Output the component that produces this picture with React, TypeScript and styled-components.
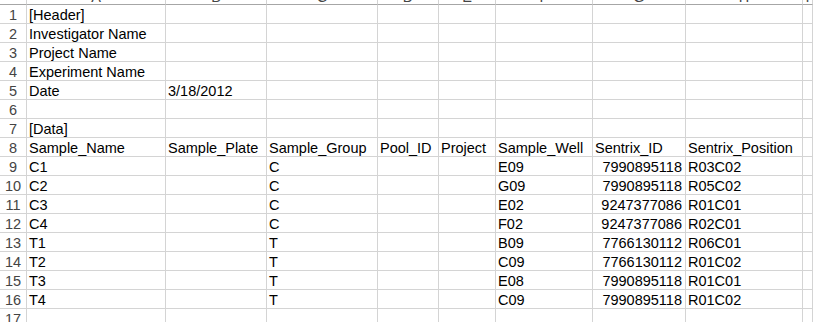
import React from "react";
import styled, { createGlobalStyle } from "styled-components";

const GlobalStyle = createGlobalStyle`
  html, body {
    margin: 0;
    padding: 0;
    background: #fff;
    overflow: hidden;
  }
  body {
    font-family: "Liberation Sans", Arial, sans-serif;
  }
`;

const COLS = ["A", "B", "C", "D", "E", "F", "G", "H", "I"];

// each row: [A, B, C, D, E, F, G, H]; G holds the numeric ids (right aligned)
const ROWS: string[][] = [
  ["[Header]"],
  ["Investigator Name"],
  ["Project Name"],
  ["Experiment Name"],
  ["Date", "3/18/2012"],
  [],
  ["[Data]"],
  ["Sample_Name", "Sample_Plate", "Sample_Group", "Pool_ID", "Project", "Sample_Well", "Sentrix_ID", "Sentrix_Position"],
  ["C1", "", "C", "", "", "E09", "7990895118", "R03C02"],
  ["C2", "", "C", "", "", "G09", "7990895118", "R05C02"],
  ["C3", "", "C", "", "", "E02", "9247377086", "R01C01"],
  ["C4", "", "C", "", "", "F02", "9247377086", "R02C01"],
  ["T1", "", "T", "", "", "B09", "7766130112", "R06C01"],
  ["T2", "", "T", "", "", "C09", "7766130112", "R01C02"],
  ["T3", "", "T", "", "", "E08", "7990895118", "R01C01"],
  ["T4", "", "T", "", "", "C09", "7990895118", "R01C02"],
  [],
];

const isNumber = (v: string) => /^\d+$/.test(v);

export default function App() {
  return (
    <>
      <GlobalStyle />
      <Sheet>
        <Corner />
        {COLS.map((c) => (
          <ColHead key={c}>
            <ColLabel>{c}</ColLabel>
          </ColHead>
        ))}
        {ROWS.map((row, r) => (
          <React.Fragment key={r}>
            <RowHead>{r + 1}</RowHead>
            {COLS.map((c, i) => {
              const v = row[i] || "";
              return (
                <Cell key={c} $right={isNumber(v)}>
                  {v}
                </Cell>
              );
            })}
          </React.Fragment>
        ))}
      </Sheet>
    </>
  );
}

const Sheet = styled.div`
  display: grid;
  grid-template-columns: 27px 139px 101px 111px 61px 57px 97px 93px 117px 1fr;
  grid-template-rows: 5px;
  grid-auto-rows: 19px;
  width: 813px;
  font-size: 14.5px;
  color: #000;
`;

const Corner = styled.div`
  box-sizing: border-box;
  border-right: 1px solid #d4d4d4;
  border-bottom: 1px solid #a6a6a6;
  overflow: hidden;
`;

const ColHead = styled(Corner)`
  display: flex;
  justify-content: center;
`;

const ColLabel = styled.span`
  display: block;
  line-height: 16px;
  margin-top: -11px;
  color: #444;
`;

const RowHead = styled.div`
  box-sizing: border-box;
  border-right: 1px solid #d4d4d4;
  border-bottom: 1px solid #d4d4d4;
  padding-top: 2px;
  line-height: 16px;
  text-align: center;
  color: #444;
  overflow: hidden;
`;

const Cell = styled.div<{ $right?: boolean }>`
  box-sizing: border-box;
  border-right: 1px solid #d4d4d4;
  border-bottom: 1px solid #d4d4d4;
  padding: 2px 3px 0 2px;
  line-height: 16px;
  white-space: nowrap;
  text-align: ${(p) => (p.$right ? "right" : "left")};
  overflow: hidden;
`;
